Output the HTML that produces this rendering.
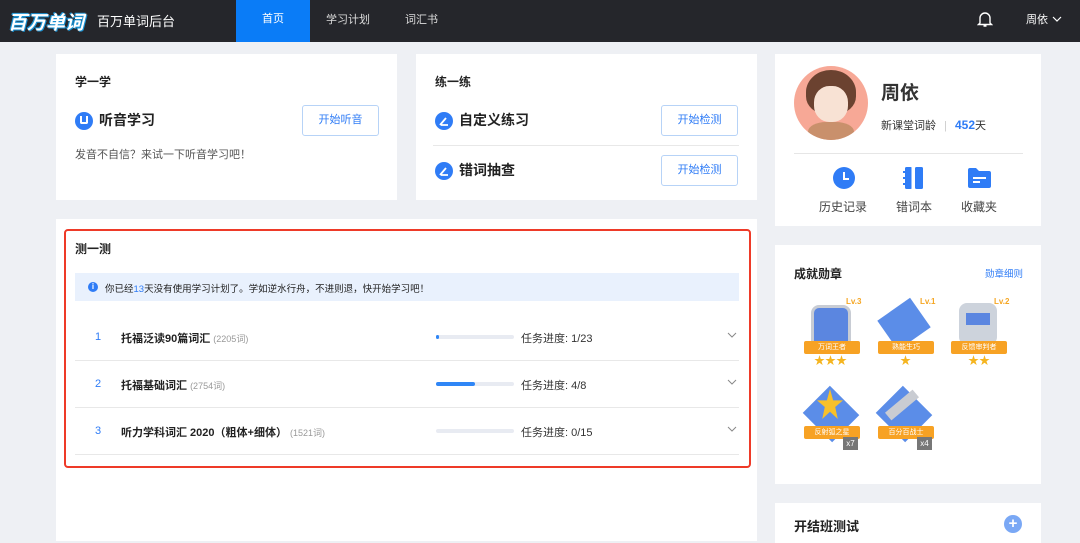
<!DOCTYPE html>
<html><head><meta charset="utf-8"><style>
*{margin:0;padding:0;box-sizing:border-box}
body{width:1080px;height:541px;overflow:hidden;background:#eef0f4;font-family:"Liberation Sans","Noto Sans CJK SC",sans-serif;color:#222;position:relative}
.a{position:absolute}
.card{position:absolute;background:#fff}
.btn{position:absolute;border:1px solid #b7d3f7;border-radius:3px;color:#2f7cf6;font-size:11px;text-align:center;line-height:29px;width:77px;height:31px}
.bar{position:absolute;left:436px;width:78px;height:4px;background:#e8ebf2;border-radius:2px}
.bar i{display:block;height:4px;background:#2f86f6;border-radius:2px}
.row{position:absolute;left:75px;width:664px;height:47px;border-bottom:1px solid #e8e8e8;font-size:11px}
.ic{position:absolute;width:18px;height:18px;border-radius:50%;background:#2f7cf6}
.chev{position:absolute;left:652px;top:18px}
</style></head><body>
<div class="a" style="left:0;top:0;width:1080px;height:42px;background:#25262b"></div>
<div class="a" style="left:8px;top:8px;color:#fff;font-size:19px;font-weight:bold;font-style:italic;text-shadow:1px 1px 0 #1a90d0,-1px -1px 0 #1a90d0">百万单词</div>
<div class="a" style="left:97px;top:11px;color:#fff;font-size:13px">百万单词后台</div>
<div class="a" style="left:236px;top:0;width:74px;height:42px;background:#0a7cf7;color:#fff;font-size:11px;text-align:center;line-height:38px">首页</div>
<div class="a" style="left:326px;top:11px;color:#ddd;font-size:11px">学习计划</div>
<div class="a" style="left:405px;top:11px;color:#ddd;font-size:11px">词汇书</div>
<svg class="a" style="left:977px;top:10px" width="16" height="18" viewBox="0 0 16 18"><path d="M3 13V8a5 5 0 0110 0v5l1.5 1.5h-13z M6.5 16h3" fill="none" stroke="#fff" stroke-width="1.4"/></svg>
<div class="a" style="left:1026px;top:11px;color:#fff;font-size:11px">周依</div>
<svg class="a" style="left:1052px;top:16px" width="10" height="6" viewBox="0 0 10 6"><path d="M1 1l4 4 4-4" fill="none" stroke="#fff" stroke-width="1.2"/></svg>

<div class="card" style="left:56px;top:54px;width:341px;height:146px"></div>
<div class="a" style="left:75px;top:73px;font-size:12px;font-weight:bold">学一学</div>
<div class="ic" style="left:75px;top:112px"></div>
<div class="a" style="left:80px;top:116px;width:8px;height:8px;border:2px solid #fff;border-top:none;border-radius:0 0 2px 2px"></div>
<div class="a" style="left:99px;top:110px;font-size:14px;font-weight:bold">听音学习</div>
<div class="btn" style="left:302px;top:105px">开始听音</div>
<div class="a" style="left:75px;top:146px;font-size:11px;color:#555">发音不自信？来试一下听音学习吧！</div>

<div class="card" style="left:416px;top:54px;width:341px;height:146px"></div>
<div class="a" style="left:435px;top:73px;font-size:12px;font-weight:bold">练一练</div>
<div class="ic" style="left:435px;top:112px"></div>
<svg class="a" style="left:438px;top:115px" width="12" height="12" viewBox="0 0 12 12"><path d="M2 10L8 3M3 10h7" stroke="#fff" stroke-width="1.8" fill="none"/></svg>
<div class="a" style="left:459px;top:110px;font-size:14px;font-weight:bold">自定义练习</div>
<div class="btn" style="left:661px;top:105px">开始检测</div>
<div class="a" style="left:433px;top:145px;width:306px;height:1px;background:#e8e8e8"></div>
<div class="ic" style="left:435px;top:162px"></div>
<svg class="a" style="left:438px;top:165px" width="12" height="12" viewBox="0 0 12 12"><path d="M2 10L8 3M3 10h7" stroke="#fff" stroke-width="1.8" fill="none"/></svg>
<div class="a" style="left:459px;top:160px;font-size:14px;font-weight:bold">错词抽查</div>
<div class="btn" style="left:661px;top:155px">开始检测</div>

<div class="card" style="left:56px;top:219px;width:701px;height:322px"></div>
<div class="a" style="left:64px;top:229px;width:687px;height:239px;border:2px solid #ee3a28;border-radius:4px"></div>
<div class="a" style="left:75px;top:240px;font-size:12px;font-weight:bold">测一测</div>
<div class="a" style="left:75px;top:273px;width:664px;height:28px;background:#e9f1fd"></div>
<div class="a" style="left:88px;top:282px;width:10px;height:10px;border-radius:50%;background:#2f7cf6;color:#fff;font-size:8px;text-align:center;line-height:10px;font-weight:bold">i</div>
<div class="a" style="left:105px;top:281px;font-size:9.5px">你已经<span style="color:#2f7cf6">13</span>天没有使用学习计划了。学如逆水行舟，不进则退，快开始学习吧！</div>
<div class="row" style="top:314px"><span class="a" style="left:20px;top:17px;color:#2f7cf6">1</span><span class="a" style="left:46px;top:16px;font-weight:bold">托福泛读90篇词汇 <span style="color:#999;font-size:9px;font-weight:normal">(2205词)</span></span><span class="a" style="left:446px;top:16px;color:#333">任务进度: 1/23</span><svg class="chev" width="10" height="6" viewBox="0 0 10 6"><path d="M1 1l4 4 4-4" fill="none" stroke="#888" stroke-width="1"/></svg></div>
<div class="bar" style="top:335px"><i style="width:3px"></i></div>
<div class="row" style="top:361px"><span class="a" style="left:20px;top:17px;color:#2f7cf6">2</span><span class="a" style="left:46px;top:16px;font-weight:bold">托福基础词汇 <span style="color:#999;font-size:9px;font-weight:normal">(2754词)</span></span><span class="a" style="left:446px;top:16px;color:#333">任务进度: 4/8</span><svg class="chev" width="10" height="6" viewBox="0 0 10 6"><path d="M1 1l4 4 4-4" fill="none" stroke="#888" stroke-width="1"/></svg></div>
<div class="bar" style="top:382px"><i style="width:39px"></i></div>
<div class="row" style="top:408px"><span class="a" style="left:20px;top:17px;color:#2f7cf6">3</span><span class="a" style="left:46px;top:16px;font-weight:bold">听力学科词汇 2020（粗体+细体） <span style="color:#999;font-size:9px;font-weight:normal">(1521词)</span></span><span class="a" style="left:446px;top:16px;color:#333">任务进度: 0/15</span><svg class="chev" width="10" height="6" viewBox="0 0 10 6"><path d="M1 1l4 4 4-4" fill="none" stroke="#888" stroke-width="1"/></svg></div>
<div class="bar" style="top:429px"></div>

<div class="card" style="left:775px;top:54px;width:266px;height:172px"></div>
<div class="a" style="left:794px;top:66px;width:74px;height:74px;border-radius:50%;background:#f7a896;overflow:hidden">
 <div class="a" style="left:12px;top:4px;width:50px;height:44px;border-radius:50% 50% 40% 40%;background:#6b4230"></div>
 <div class="a" style="left:20px;top:20px;width:34px;height:36px;border-radius:45%;background:#f8e2d4"></div>
 <div class="a" style="left:14px;top:56px;width:46px;height:24px;border-radius:40% 40% 0 0;background:#c9906c"></div>
</div>
<div class="a" style="left:881px;top:78px;font-size:19px;font-weight:bold;color:#333">周依</div>
<div class="a" style="left:881px;top:117px;font-size:11px;color:#333">新课堂词龄 <span style="color:#ccc;margin:0 5px">|</span> <b style="color:#2f7cf6;font-size:12px">452</b>天</div>
<div class="a" style="left:794px;top:153px;width:229px;height:1px;background:#e6e6e6"></div>
<div class="a" style="left:833px;top:167px;width:22px;height:22px;border-radius:50%;background:#2f7cf6"></div>
<div class="a" style="left:843px;top:172px;width:6px;height:8px;border-left:2px solid #fff;border-bottom:2px solid #fff"></div>
<svg class="a" style="left:903px;top:167px" width="22" height="22" viewBox="0 0 22 22"><rect x="2" y="0" width="7" height="22" rx="1.5" fill="#2f7cf6"/><rect x="12" y="0" width="8" height="22" rx="1.5" fill="#2f7cf6"/><path d="M0 5h4M0 11h4M0 17h4" stroke="#2f7cf6" stroke-width="2"/><path d="M9 0v22" stroke="#fff" stroke-width="1"/></svg>
<svg class="a" style="left:968px;top:168px" width="23" height="20" viewBox="0 0 23 20"><path d="M0 2a2 2 0 012-2h6l3 3h10a2 2 0 012 2v13a2 2 0 01-2 2H2a2 2 0 01-2-2z" fill="#2f7cf6"/><path d="M5 10h13M5 14h7" stroke="#fff" stroke-width="2"/></svg>
<div class="a" style="left:819px;top:198px;font-size:12px;color:#444">历史记录</div>
<div class="a" style="left:896px;top:198px;font-size:12px;color:#444">错词本</div>
<div class="a" style="left:961px;top:198px;font-size:12px;color:#444">收藏夹</div>

<div class="card" style="left:775px;top:245px;width:266px;height:239px"></div>
<div class="a" style="left:794px;top:265px;font-size:12px;font-weight:bold">成就勋章</div>
<div class="a" style="left:985px;top:266px;font-size:9.5px;color:#2f7cf6">勋章细则</div>
<div class="a" style="left:846px;top:297px;font-size:8px;color:#f5a623;font-weight:bold">Lv.3</div>
<div class="a" style="left:920px;top:297px;font-size:8px;color:#f5a623;font-weight:bold">Lv.1</div>
<div class="a" style="left:994px;top:297px;font-size:8px;color:#f5a623;font-weight:bold">Lv.2</div>
<div class="a" style="left:811px;top:305px;width:40px;height:40px;background:#5b86e0;border-radius:8px 8px 4px 4px;border:3px solid #c8ccd4"></div>
<div class="a" style="left:884px;top:306px;width:40px;height:36px;background:#5b8de8;transform:rotate(-35deg)"></div>
<div class="a" style="left:959px;top:303px;width:38px;height:42px;background:#cdd3dc;border-radius:8px"></div>
<div class="a" style="left:966px;top:313px;width:24px;height:12px;background:#5b86e0"></div>
<div class="a" style="left:804px;top:341px;width:56px;height:13px;background:#f7a224;border-radius:2px;color:#fff;font-size:7px;text-align:center;line-height:13px">万词王者</div>
<div class="a" style="left:878px;top:341px;width:56px;height:13px;background:#f7a224;border-radius:2px;color:#fff;font-size:7px;text-align:center;line-height:13px">熟能生巧</div>
<div class="a" style="left:951px;top:341px;width:56px;height:13px;background:#f7a224;border-radius:2px;color:#fff;font-size:7px;text-align:center;line-height:13px">反馈审判者</div>
<div class="a" style="left:814px;top:352px;color:#f5b520;font-size:11px">★★★</div>
<div class="a" style="left:900px;top:352px;color:#f5b520;font-size:11px">★</div>
<div class="a" style="left:968px;top:352px;color:#f5b520;font-size:11px">★★</div>
<div class="a" style="left:805px;top:390px;width:52px;height:48px;background:#5b8de8;transform:rotate(45deg) scale(.8)"></div>
<div class="a" style="left:817px;top:389px;width:26px;height:30px;background:#f7c02a;clip-path:polygon(50% 0,62% 38%,100% 38%,70% 60%,80% 100%,50% 76%,20% 100%,30% 60%,0 38%,38% 38%)"></div>
<div class="a" style="left:878px;top:390px;width:52px;height:48px;background:#5b8de8;transform:rotate(45deg) scale(.8)"></div>
<div class="a" style="left:884px;top:400px;width:36px;height:10px;background:#c9ccd2;transform:rotate(-40deg)"></div>
<div class="a" style="left:804px;top:426px;width:56px;height:13px;background:#f7a224;border-radius:2px;color:#fff;font-size:7px;text-align:center;line-height:13px">反射弧之星</div>
<div class="a" style="left:878px;top:426px;width:56px;height:13px;background:#f7a224;border-radius:2px;color:#fff;font-size:7px;text-align:center;line-height:13px">百分百战士</div>
<div class="a" style="left:843px;top:437px;width:15px;height:13px;background:#777;color:#fff;font-size:8px;text-align:center;line-height:13px">x7</div>
<div class="a" style="left:917px;top:437px;width:15px;height:13px;background:#777;color:#fff;font-size:8px;text-align:center;line-height:13px">x4</div>

<div class="card" style="left:775px;top:503px;width:266px;height:40px"></div>
<div class="a" style="left:794px;top:516px;font-size:13px;font-weight:bold">开结班测试</div>
<div class="a" style="left:1004px;top:515px;width:18px;height:18px;border-radius:50%;background:#7aa8f5;color:#fff;font-size:15px;text-align:center;line-height:18px;font-weight:bold">+</div>
</body></html>
